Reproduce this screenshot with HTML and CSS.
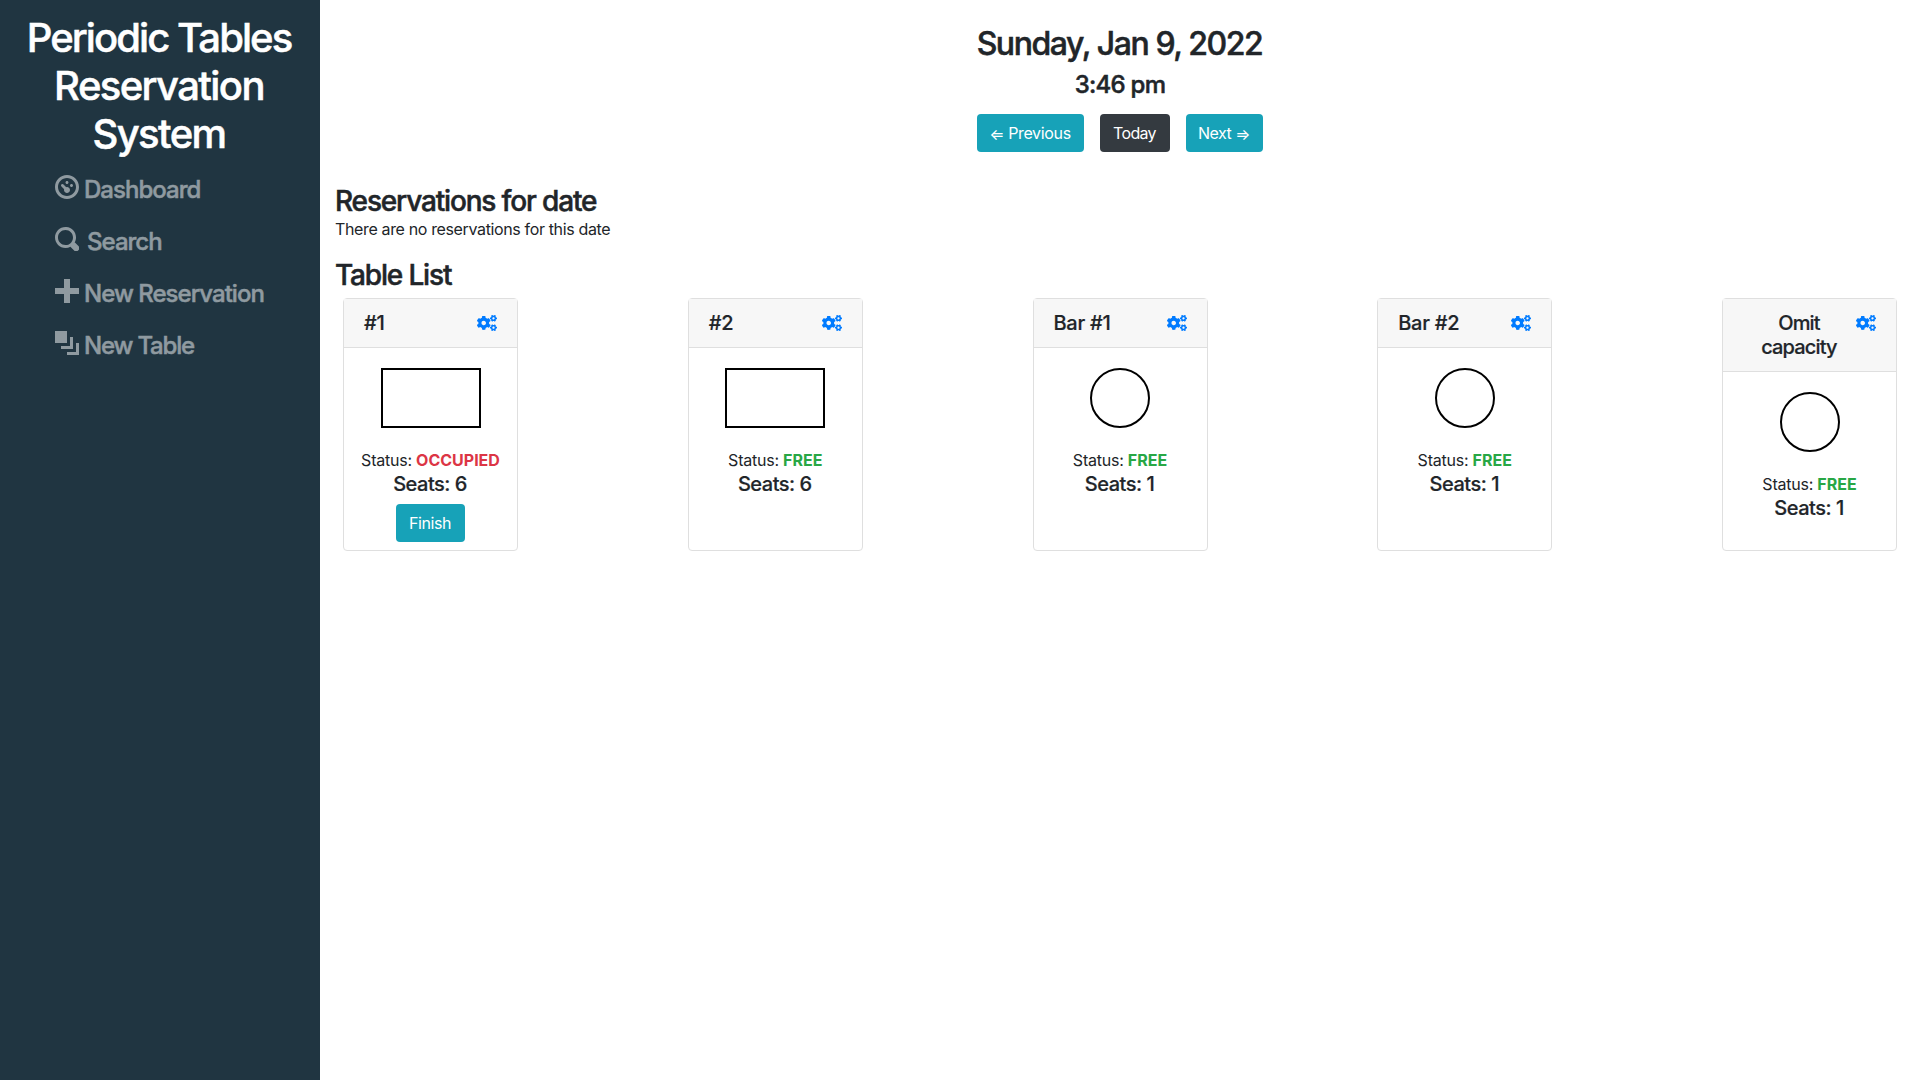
FILE: index.html
```
<!DOCTYPE html>
<html lang="en">
<head>
<meta charset="utf-8">
<title>Periodic Tables Reservation System</title>
<link rel="stylesheet" href="styles.css">
</head>
<body>
<svg class="sprite" aria-hidden="true">
  <symbol id="gears" viewBox="0 0 640 512">
    <path id="small-gear" d="M512.1 191l-8.2 14.3c-3 5.3-9.4 7.5-15.1 5.4-11.8-4.4-22.6-10.7-32.1-18.6-4.6-3.8-5.8-10.5-2.8-15.7l8.2-14.3c-6.9-8-12.3-17.3-15.9-27.4h-16.5c-6 0-11.2-4.3-12.2-10.3-2-12-2.1-24.6 0-37.1 1-6 6.2-10.4 12.2-10.4h16.5c3.6-10.1 9-19.4 15.9-27.4l-8.2-14.3c-3-5.2-1.9-11.9 2.8-15.7 9.5-7.9 20.4-14.2 32.1-18.6 5.7-2.1 12.1.1 15.1 5.4l8.2 14.3c10.5-1.9 21.2-1.9 31.7 0L552 6.3c3-5.3 9.4-7.5 15.1-5.4 11.8 4.4 22.6 10.7 32.1 18.6 4.6 3.8 5.8 10.5 2.8 15.7l-8.2 14.3c6.9 8 12.3 17.3 15.9 27.4h16.5c6 0 11.2 4.3 12.2 10.3 2 12 2.1 24.6 0 37.1-1 6-6.2 10.4-12.2 10.4h-16.5c-3.6 10.1-9 19.4-15.9 27.4l8.2 14.3c3 5.2 1.9 11.9-2.8 15.7-9.5 7.9-20.4 14.2-32.1 18.6-5.7 2.1-12.1-.1-15.1-5.4l-8.2-14.3c-10.4 1.9-21.2 1.9-31.7 0zm-10.5-58.8c38.5 29.6 82.4-14.3 52.8-52.8-38.5-29.7-82.4 14.3-52.8 52.8z"/>
    <use href="#small-gear" y="300"/>
    <path d="M386.3 286.1l33.7 16.8c10.1 5.8 14.5 18.1 10.5 29.1-8.9 24.2-26.4 46.4-42.6 65.8-7.4 8.9-20.2 11.1-30.3 5.3l-29.1-16.8c-16 13.7-34.6 24.6-54.9 31.7v33.6c0 11.6-8.3 21.6-19.7 23.6-24.6 4.2-50.4 4.4-75.9 0-11.5-2-20-11.9-20-23.6V418c-20.3-7.2-38.9-18-54.9-31.7L74 403c-10 5.8-22.9 3.6-30.3-5.3-16.2-19.4-33.3-41.6-42.2-65.7-4-10.9.4-23.2 10.5-29.1l33.3-16.8c-3.9-20.9-3.9-42.4 0-63.4L12 205.8c-10.1-5.8-14.6-18.1-10.5-29 8.9-24.2 26-46.4 42.2-65.8 7.4-8.9 20.2-11.1 30.3-5.3l29.1 16.8c16-13.7 34.6-24.6 54.9-31.7V57.1c0-11.5 8.2-21.5 19.6-23.5 24.6-4.2 50.5-4.4 76-.1 11.5 2 20 11.9 20 23.6v33.6c20.3 7.2 38.9 18 54.9 31.7l29.1-16.8c10-5.8 22.9-3.6 30.3 5.3 16.2 19.4 33.2 41.6 42.1 65.8 4 10.9.1 23.2-10 29.1l-33.7 16.8c3.9 21 3.9 42.5 0 63.5zm-117.6 21.1c59.2-77-28.7-164.9-105.7-105.7-59.2 77 28.7 164.9 105.7 105.7z"/>
  </symbol>
</svg>
<div class="layout">
  <nav class="sidebar">
    <h1 class="brand"><span class="brand-first">Periodic Tables</span> Reservation System</h1>
    <ul class="menu">
      <li class="menu-item">
        <svg class="menu-icon" viewBox="0 0 8 8"><path d="M4 0c-2.2 0-4 1.8-4 4s1.8 4 4 4 4-1.8 4-4-1.8-4-4-4zm0 1c1.66 0 3 1.34 3 3s-1.34 3-3 3-3-1.34-3-3 1.34-3 3-3zm0 1c-.28 0-.5.22-.5.5s.22.5.5.5.5-.22.5-.5-.22-.5-.5-.5zm-1.66 1a.5.5 0 0 0-.19.84l.91.91c-.02.08-.06.16-.06.25 0 .55.45 1 1 1s1-.45 1-1-.45-1-1-1c-.09 0-.17.04-.25.06l-.91-.91a.5.5 0 0 0-.44-.16.5.5 0 0 0-.06 0zm3.16 0c-.28 0-.5.22-.5.5s.22.5.5.5.5-.22.5-.5-.22-.5-.5-.5z"/></svg>
        <span class="menu-label">Dashboard</span>
      </li>
      <li class="menu-item menu-item-search">
        <svg class="menu-icon" viewBox="0 0 8 8"><path d="M3.5 0c-1.93 0-3.5 1.57-3.5 3.5s1.57 3.5 3.5 3.5c.59 0 1.17-.14 1.66-.41a1 1 0 0 0 .13.13l1 1a1.02 1.02 0 1 0 1.44-1.44l-1-1a1 1 0 0 0-.16-.13c.27-.49.44-1.06.44-1.66 0-1.93-1.55-3.5-3.5-3.5zm0 1c1.39 0 2.5 1.11 2.5 2.5 0 .66-.24 1.27-.66 1.72-.01.01-.02.02-.03.03a1 1 0 0 0-.13.13c-.44.4-1.04.63-1.69.63-1.39 0-2.5-1.11-2.5-2.5s1.11-2.5 2.5-2.5z"/></svg>
        <span class="menu-label">Search</span>
      </li>
      <li class="menu-item">
        <svg class="menu-icon" viewBox="0 0 8 8"><path d="M3 0v3h-3v2h3v3h2v-3h3v-2h-3v-3h-2z"/></svg>
        <span class="menu-label">New Reservation</span>
      </li>
      <li class="menu-item menu-item-table">
        <svg class="menu-icon" viewBox="0 0 8 8"><path d="M0 0v4h4v-4h-4zm5 2v3h-3v1h4v-4h-1zm2 2v3h-3v1h4v-4h-1z"/></svg>
        <span class="menu-label">New Table</span>
      </li>
    </ul>
  </nav>
  <main class="content">
    <header class="date-header">
      <h2 class="date">Sunday, Jan 9, 2022</h2>
      <h4 class="time">3:46 pm</h4>
      <div class="date-nav">
        <button class="btn btn-info btn-previous"><span class="arrow">⇐</span><span>Previous</span></button>
        <button class="btn btn-dark">Today</button>
        <button class="btn btn-info btn-next"><span>Next</span><span class="arrow">⇒</span></button>
      </div>
    </header>
    <section>
      <h3 class="heading">Reservations for date</h3>
      <p class="empty">There are no reservations for this date</p>
    </section>
    <section>
      <h3 class="heading">Table List</h3>
      <div class="tables">
        <article class="card">
          <div class="card-header"><h5 class="name">#1</h5><svg class="gears"><use href="#gears"/></svg></div>
          <div class="card-body">
            <div class="shape shape-table"></div>
            <div class="status">Status: <b class="occupied">OCCUPIED</b></div>
            <h5 class="seats">Seats: 6</h5>
            <button class="btn btn-info btn-finish">Finish</button>
          </div>
        </article>
        <article class="card">
          <div class="card-header"><h5 class="name">#2</h5><svg class="gears"><use href="#gears"/></svg></div>
          <div class="card-body">
            <div class="shape shape-table"></div>
            <div class="status">Status: <b class="free">FREE</b></div>
            <h5 class="seats">Seats: 6</h5>
          </div>
        </article>
        <article class="card">
          <div class="card-header"><h5 class="name">Bar #1</h5><svg class="gears"><use href="#gears"/></svg></div>
          <div class="card-body">
            <div class="shape shape-bar"></div>
            <div class="status">Status: <b class="free">FREE</b></div>
            <h5 class="seats">Seats: 1</h5>
          </div>
        </article>
        <article class="card">
          <div class="card-header"><h5 class="name">Bar #2</h5><svg class="gears"><use href="#gears"/></svg></div>
          <div class="card-body">
            <div class="shape shape-bar"></div>
            <div class="status">Status: <b class="free">FREE</b></div>
            <h5 class="seats">Seats: 1</h5>
          </div>
        </article>
        <article class="card">
          <div class="card-header"><h5 class="name name-long">Omit capacity</h5><svg class="gears"><use href="#gears"/></svg></div>
          <div class="card-body">
            <div class="shape shape-bar"></div>
            <div class="status">Status: <b class="free">FREE</b></div>
            <h5 class="seats">Seats: 1</h5>
          </div>
        </article>
      </div>
    </section>
  </main>
</div>
</body>
</html>
```
FILE: styles.css
```
* { box-sizing: border-box; }

body {
  margin: 0;
  font: 400 16px/24px Inter, "Liberation Sans", sans-serif;
  letter-spacing: -0.0225em;
  color: #212529;
  background: #fff;
}

h1, h2, h3, h4, h5, p, ul { margin: 0; padding: 0; font-weight: 500; }

h1, h2, h3, h4, .menu-label { -webkit-text-stroke: 0.5px currentColor; }
h5 { -webkit-text-stroke: 0.2px currentColor; }

.sprite { display: none; }

.layout { display: flex; min-height: 100vh; }

/* Sidebar */
.sidebar {
  flex: none;
  width: 320px;
  padding: 14px 21px 14px 19px;
  background: #203541;
}

.brand {
  font-size: 40px;
  line-height: 48px;
  letter-spacing: -0.04em;
  text-align: center;
  color: #fff;
}

.brand-first { letter-spacing: -0.048em; }

.menu {
  list-style: none;
  padding: 5px 0 0 36px;
  color: #8f9aa0;
}

.menu-item {
  display: flex;
  align-items: center;
  gap: 5px;
  height: 52px;
  font-size: 24px;
  letter-spacing: -0.0408em;
}

.menu-item-search { gap: 8px; }
.menu-item-table { letter-spacing: -0.0495em; }
.menu-label { padding-top: 2px; font-weight: 500; }

.menu-icon {
  width: 24px;
  height: 24px;
  margin-bottom: 4px;
  fill: currentColor;
}

/* Main area */
.content { flex: 1; padding: 25px 15px; }

.date-header {
  display: flex;
  flex-direction: column;
  align-items: center;
  padding-bottom: 31px;
}

.date {
  margin-bottom: 8px;
  padding-right: 1px;
  font-size: 32px;
  line-height: 38.4px;
  letter-spacing: -0.0448em;
}

.time {
  margin-bottom: 13.8px;
  font-size: 24px;
  line-height: 28.8px;
  letter-spacing: -0.0307em;
}

.date-nav { display: flex; gap: 16px; }

.btn {
  display: flex;
  align-items: center;
  justify-content: center;
  gap: 4px;
  height: 38px;
  padding: 0 1px 0 0;
  border: 0;
  border-radius: 4px;
  font: inherit;
  letter-spacing: -0.026em;
  color: #fff;
}

.btn-info { background: #17a2b8; }
.btn-dark { width: 70px; letter-spacing: -0.0425em; background: #343a40; }
.btn-previous { width: 107px; letter-spacing: -0.0216em; }
.btn-next { width: 77px; letter-spacing: -0.0327em; }
.btn-finish { width: 69px; margin-top: 8px; }

.arrow { padding-top: 2px; }

.heading {
  padding-top: 4px;
  font-size: 28px;
  line-height: 29.6px;
  letter-spacing: -0.0415em;
}

.empty { margin-bottom: 16px; font-weight: 400; }

/* Table cards */
.tables { display: flex; justify-content: space-between; padding: 7.6px 8px; }

.card {
  width: 175px;
  border: 1px solid #dfdfdf;
  border-radius: 4px;
}

.card-header {
  display: flex;
  justify-content: space-between;
  padding: 12px 20px;
  border-bottom: 1px solid #dfdfdf;
  background: #f7f7f7;
}

.name {
  font-size: 20px;
  line-height: 24px;
  letter-spacing: -0.014em;
  text-align: center;
}

.name-long { padding-right: 1px; letter-spacing: -0.042em; }

.gears {
  flex: none;
  width: 20px;
  height: 16px;
  margin-top: 4px;
  fill: #007bff;
}

.card-body {
  display: flex;
  flex-direction: column;
  align-items: center;
  padding: 20px 0 8px;
}

.shape { height: 60px; margin-bottom: 20px; border: 2px solid #000; }
.shape-table { width: 100px; }
.shape-bar { width: 60px; border-radius: 50%; }

.status { letter-spacing: -0.0146em; }
.status b { font-weight: 700; letter-spacing: 0; }
.occupied { color: #dc3545; }
.free { color: #28a745; }

.seats { padding-right: 1px; font-size: 20px; line-height: 24px; letter-spacing: -0.0245em; }
```
